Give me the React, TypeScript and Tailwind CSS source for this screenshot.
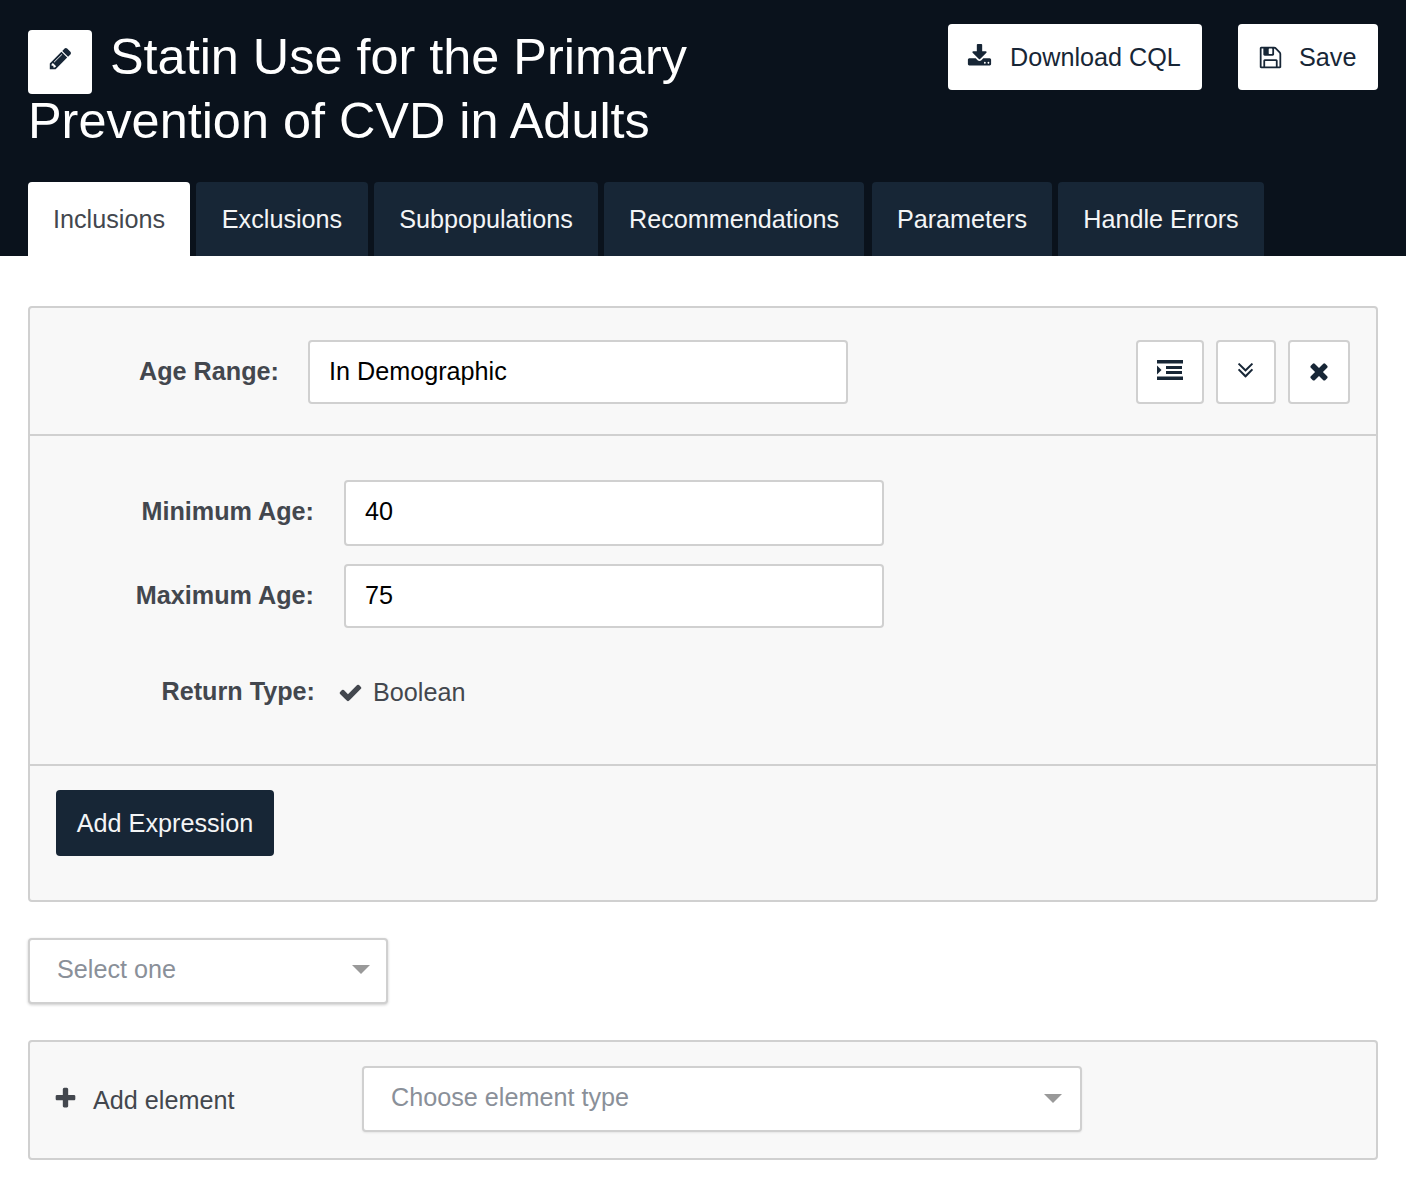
const tabs = [
  { label: "Exclusions", w: "w-[172px]" },
  { label: "Subpopulations", w: "w-[224px]" },
  { label: "Recommendations", w: "w-[260px]" },
  { label: "Parameters", w: "w-[180px]" },
  { label: "Handle Errors", w: "w-[206px]" },
];

const paths = {
  pencil: "M491 1536l91-91-235-235-91 91v107h128v128h107zm523-928q0-22-22-22-10 0-17 7l-542 542q-7 7-7 17 0 22 22 22 10 0 17-7l542-542q7-7 7-17zm-54-192l416 416-832 832h-416v-416zm683 96q0 53-37 90l-166 166-416-416 166-165q36-38 90-38 53 0 91 38l235 234q37 39 37 91z",
  download: "M1344 1344q0-26-19-45t-45-19-45 19-19 45 19 45 45 19 45-19 19-45zm256 0q0-26-19-45t-45-19-45 19-19 45 19 45 45 19 45-19 19-45zm128-224v320q0 40-28 68t-68 28h-1472q-40 0-68-28t-28-68v-320q0-40 28-68t68-28h465l135 136q58 56 136 56t136-56l136-136h464q40 0 68 28t28 68zm-325-569q17 41-14 70l-448 448q-18 19-45 19t-45-19l-448-448q-31-29-14-70 17-39 59-39h256v-448q0-26 19-45t45-19h256q26 0 45 19t19 45v448h256q42 0 59 39z",
  save: "M512 1536h768v-384h-768v384zm896 0h128v-896q0-14-10-38.5t-20-34.5l-281-281q-10-10-34-20t-39-10v416q0 40-28 68t-68 28h-576q-40 0-68-28t-28-68v-416h-128v1280h128v-416q0-40 28-68t68-28h832q40 0 68 28t28 68v416zm-384-928v-320q0-13-9.5-22.5t-22.5-9.5h-192q-13 0-22.5 9.5t-9.5 22.5v320q0 13 9.5 22.5t22.5 9.5h192q13 0 22.5-9.5t9.5-22.5zm640 32v928q0 40-28 68t-68 28h-1344q-40 0-68-28t-28-68v-1344q0-40 28-68t68-28h928q40 0 88 20t76 48l280 280q28 28 48 76t20 88z",
  check: "M1671 566q0 40-28 68l-724 724-136 136q-28 28-68 28t-68-28l-136-136-362-362q-28-28-28-68t28-68l136-136q28-28 68-28t68 28l294 295 656-657q28-28 68-28t68 28l136 136q28 28 28 68z",
  times: "M1490 1322q0 40-28 68l-136 136q-28 28-68 28t-68-28l-294-294-294 294q-28 28-68 28t-68-28l-136-136q-28-28-28-68t28-68l294-294-294-294q-28-28-28-68t28-68l136-136q28-28 68-28t68 28l294 294 294-294q28-28 68-28t68 28l136 136q28 28 28 68t-28 68l-294 294 294 294q28 28 28 68z",
  plus: "M1600 736v192q0 40-28 68t-68 28h-416v416q0 40-28 68t-68 28h-192q-40 0-68-28t-28-68v-416h-416q-40 0-68-28t-28-68v-192q0-40 28-68t68-28h416v-416q0-40 28-68t68-28h192q40 0 68 28t28 68v416h416q40 0 68 28t28 68z",
  angles: "M1395 864q0 13-10 23l-466 466q-10 10-23 10t-23-10l-466-466q-10-10-10-23t10-23l50-50q10-10 23-10t23 10l393 393 393-393q10-10 23-10t23 10l50 50q10 10 10 23zm0-384q0 13-10 23l-466 466q-10 10-23 10t-23-10l-466-466q-10-10-10-23t10-23l50-50q10-10 23-10t23 10l393 393 393-393q10-10 23-10t23 10l50 50q10 10 10 23z",
};

function Icon({ d, className }: { d: string; className: string }) {
  return (
    <svg viewBox="0 0 1792 1792" fill="currentColor" className={`shrink-0 ${className}`}>
      <path d={d} />
    </svg>
  );
}

function IndentIcon() {
  return (
    <svg viewBox="0 0 26 20" fill="currentColor" className="mb-[4px] h-[20px] w-[26px]">
      <rect x="0" y="0" width="26" height="3.5" />
      <rect x="9" y="6" width="16" height="3" />
      <rect x="9" y="11" width="16" height="3" />
      <rect x="0" y="16.5" width="26" height="3.5" />
      <path d="M0 5.5 L4.5 10 L0 14.5 Z" />
    </svg>
  );
}

function Caret({ className }: { className: string }) {
  return <span className={`h-0 w-0 border-x-[9px] border-t-[9px] border-x-transparent border-t-[#999999] ${className}`} />;
}

function TextField({ value, className }: { value: string; className: string }) {
  return (
    <div className={`flex items-center rounded-[4px] border-2 border-[#d0d0d0] bg-white pl-[19px] text-black ${className}`}>
      {value}
    </div>
  );
}

export default function App() {
  return (
    <div className="min-h-[1188px] bg-white font-['Liberation_Sans',Arial,sans-serif] text-[25.2px] text-[#43474e]">
      <header className="h-[256px] bg-[#0a121c] px-[28px] pt-[24px]">
        <div className="flex h-[158px] items-start justify-between">
          <h1 className="mt-[1px] w-[700px] text-[50.4px] font-normal leading-[64px] text-white">
            <span className="mt-[5px] -mb-[5px] mr-[18px] inline-flex h-[64px] w-[64px] items-center justify-center rounded-[4px] bg-white align-top text-[#172636]">
              <Icon d={paths.pencil} className="mb-[7px] h-[25px] w-[25px]" />
            </span>
            Statin Use for the Primary Prevention of CVD in Adults
          </h1>
          <div className="flex gap-[36px]">
            <button className="flex h-[66px] w-[254px] items-center gap-[18px] rounded-[4px] bg-white pl-[19px] text-[#172636]">
              <Icon d={paths.download} className="-mt-[1px] h-[25px] w-[25px]" />
              <span className="pt-[2px]">Download CQL</span>
            </button>
            <button className="flex h-[66px] w-[140px] items-center gap-[16px] rounded-[4px] bg-white pl-[20px] text-[#172636]">
              <Icon d={paths.save} className="h-[25px] w-[25px]" />
              <span className="pt-[2px]">Save</span>
            </button>
          </div>
        </div>
        <nav className="flex h-[74px] gap-[6px]">
          <div className="flex w-[162px] items-center justify-center rounded-t-[4px] bg-white pt-[2px] text-[#43474e]">Inclusions</div>
          {tabs.map((t, i) => (
            <div key={t.label} className={`flex items-center justify-center rounded-t-[4px] bg-[#172636] pt-[2px] text-[#f4f5f6] ${t.w} ${i === 3 ? "ml-[2px]" : ""}`}>
              {t.label}
            </div>
          ))}
        </nav>
      </header>

      <main className="px-[28px] pt-[50px]">
        <section className="rounded-[4px] border-2 border-[#d0d0d0] bg-[#f8f8f8]">
          <div className="flex h-[128px] items-start justify-between border-b-2 border-[#d0d0d0] pl-[109px] pr-[26px] pt-[32px]">
            <div className="flex h-[64px] items-center">
              <label className="w-[169px] font-bold">Age Range:</label>
              <TextField value="In Demographic" className="h-[64px] w-[540px]" />
            </div>
            <div className="flex gap-[12px] text-[#172636]">
              <button className="flex h-[64px] w-[68px] items-center justify-center rounded-[4px] border-2 border-[#d0d0d0] bg-white">
                <IndentIcon />
              </button>
              <button className="flex h-[64px] w-[60px] items-center justify-center rounded-[4px] border-2 border-[#d0d0d0] bg-white">
                <Icon d={paths.angles} className="mb-[3px] mr-[1px] h-[27px] w-[27px]" />
              </button>
              <button className="flex h-[64px] w-[62px] items-center justify-center rounded-[4px] border-2 border-[#d0d0d0] bg-white">
                <Icon d={paths.times} className="mb-[2px] h-[26px] w-[26px]" />
              </button>
            </div>
          </div>

          <div className="h-[330px] border-b-2 border-[#d0d0d0] pt-[44px]">
            <div className="flex items-center">
              <label className="w-[284px] pb-[3px] text-right font-bold">Minimum Age:</label>
              <TextField value="40" className="ml-[30px] h-[66px] w-[540px] pb-[3px]" />
            </div>
            <div className="mt-[18px] flex items-center">
              <label className="w-[284px] text-right font-bold">Maximum Age:</label>
              <TextField value="75" className="ml-[30px] h-[64px] w-[540px]" />
            </div>
            <div className="mt-[45px] flex items-center">
              <label className="w-[285px] pb-[2px] text-right font-bold">Return Type:</label>
              <Icon d={paths.check} className="ml-[23px] h-[25px] w-[25px]" />
              <span className="ml-[10px] pb-[1px]">Boolean</span>
            </div>
          </div>

          <div className="h-[134px] pl-[26px] pt-[24px]">
            <button className="h-[66px] w-[218px] rounded-[4px] bg-[#172636] pt-[2px] text-[#f4f5f6]">Add Expression</button>
          </div>
        </section>

        <div className="mt-[36px] flex h-[66px] w-[360px] items-center justify-between rounded-[4px] border-2 border-[#d0d0d0] bg-white pl-[27px] pr-[16px] text-[#8a9099] shadow-[0_1px_3px_rgba(0,0,0,0.2)]">
          <span className="pb-[3px]">Select one</span>
          <Caret className="mb-[3px]" />
        </div>

        <section className="mt-[36px] flex h-[120px] items-start rounded-[4px] border-2 border-[#d0d0d0] bg-[#f8f8f8] pl-[23px] pt-[24px]">
          <div className="flex h-[66px] w-[309px] items-center">
            <Icon d={paths.plus} className="-mt-[2px] h-[25px] w-[25px]" />
            <span className="ml-[15px] pt-[3px]">Add element</span>
          </div>
          <div className="flex h-[66px] w-[720px] items-center justify-between rounded-[4px] border-2 border-[#d0d0d0] bg-white pb-[3px] pl-[27px] pr-[18px] text-[#8a9099] shadow-[0_1px_2px_rgba(0,0,0,0.08)]">
            <span>Choose element type</span>
            <Caret className="mt-[2px]" />
          </div>
        </section>
      </main>
    </div>
  );
}
